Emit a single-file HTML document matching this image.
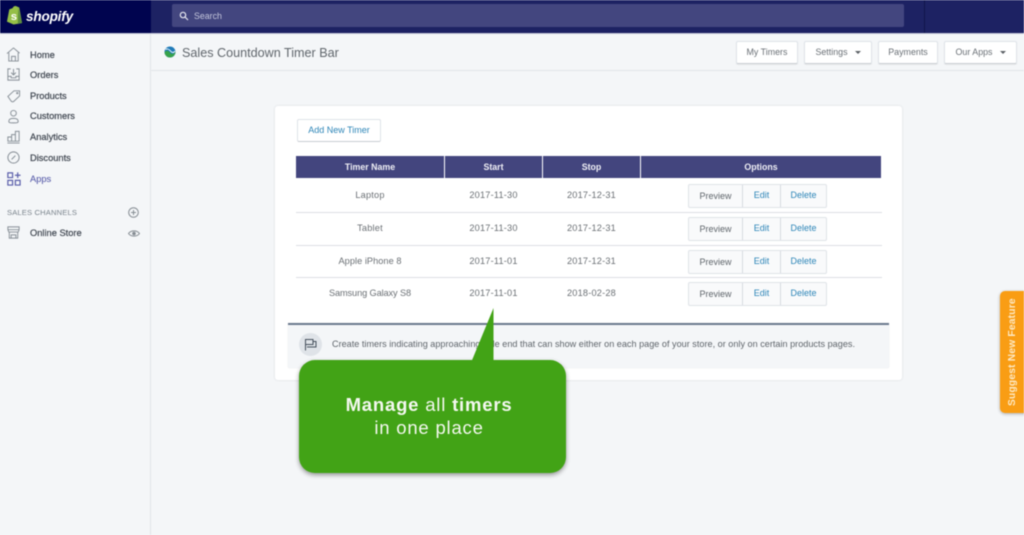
<!DOCTYPE html>
<html lang="en"><head><meta charset="utf-8"><title>Sales Countdown Timer Bar</title>
<style>
html,body{margin:0;padding:0}
body{width:1024px;height:535px;overflow:hidden;background:#f4f6f8;position:relative;font-family:"Liberation Sans",sans-serif;color:#5c6166}
#w{position:absolute;left:0;top:0;width:1024px;height:535px;overflow:hidden;filter:blur(.5px)}
.a{position:absolute;white-space:nowrap}
.nav{position:absolute;left:30px;font-size:9.3px;line-height:12px;color:#3f4650;font-weight:normal;-webkit-text-stroke:.2px #3f4650}
.ic{position:absolute;left:6px;width:15px;height:15px;fill:none;stroke:#858d95;stroke-width:1}
.tb{position:absolute;top:41px;height:23px;background:#fff;border:1px solid #dfe3e8;border-bottom-color:#c9cdd2;border-radius:2px;box-sizing:border-box;font-size:8.9px;line-height:20px;text-align:center;color:#6a7076;box-shadow:0 1px 1px rgba(0,0,0,.06)}
.car{display:inline-block;width:0;height:0;border:3px solid transparent;border-top:3.5px solid #5c6166;border-bottom:0;margin-left:7px;vertical-align:1px}
.th{position:absolute;top:156px;height:22px;background:#43457e;color:#f0f0f6;font-size:8.8px;font-weight:bold;line-height:22px;text-align:center}
.td{position:absolute;font-size:9.2px;line-height:12px;color:#6b7075;text-align:center;letter-spacing:.2px}
.hr{position:absolute;left:296px;width:586px;height:1px;background:#dcdfe3}
.bg{position:absolute;left:688px;width:139px;height:24px;background:#f9fafb;border:1px solid #dfe3e8;box-sizing:border-box;border-radius:2px}
.bg span{position:absolute;top:0;height:22px;line-height:21px;font-size:9px;text-align:center;color:#2e86b8}
.bg span.p{top:1px;color:#5f656b}
.bg i{position:absolute;top:0;width:1px;height:22px;background:#d7dbdf}
</style></head><body><div id="w">

<div class="a" style="left:0;top:0;width:1024px;height:33px;background:#1d2263"></div>
<div class="a" style="left:0;top:0;width:151px;height:33px;background:#00044f"></div>
<div class="a" style="left:0;top:33px;width:1024px;height:1px;background:#c4c7d6"></div>
<div class="a" style="left:924px;top:0;width:1px;height:33px;background:#11154b"></div>
<svg class="a" style="left:6px;top:5px" width="17" height="20" viewBox="0 0 18 21"><path d="M1 17.5 3.5 4.5 7 3.2C8 1 10 .5 11.5 1.5L14 2.5 17 19 8 20.5Z" fill="#95bf47"/><path d="M13 2.5 17 19 12.5 20Z" fill="#5e8e3e"/><text x="5" y="16" font-family="Liberation Sans" font-size="12" font-weight="bold" fill="#fff">s</text></svg>
<div class="a" style="left:26px;top:8px;font-size:13.6px;line-height:18px;font-weight:bold;font-style:italic;color:#fff;letter-spacing:-.2px">shopify</div>
<div class="a" style="left:172px;top:4px;width:732px;height:23px;background:#43467f;border-radius:2px"></div>
<svg class="a" style="left:179px;top:11px" width="10" height="10" viewBox="0 0 10 10" fill="none" stroke="#e6e7f0" stroke-width="1.2"><circle cx="4" cy="4" r="2.7"/><path d="M6 6l3 3"/></svg>
<div class="a" style="left:194px;top:10px;font-size:8.8px;line-height:12px;color:#c4c6dc">Search</div>

<div class="a" style="left:150px;top:34px;width:1px;height:501px;background:#e3e6e9"></div>
<div class="a" style="left:151px;top:70px;width:873px;height:1px;background:#e3e6e9"></div>

<svg class="ic" style="top:47px" viewBox="0 0 16 16"><path d="M1 7 8 1l6.500 5.500M3 6v9h10V6M6 15v-5h4v5"/></svg>
<div class="nav" style="top:49px">Home</div>
<svg class="ic" style="top:67px" viewBox="0 0 16 16"><path d="M5 2H2v12h12V2h-3M8 2v6M5.500 6 8 8.500 10.500 6M2 10h3.500v1.500h5V10H14"/></svg>
<div class="nav" style="top:69px">Orders</div>
<svg class="ic" style="top:88px" viewBox="0 0 16 16"><path d="M2 9 8.500 3h6v5.500L8 14.500C7 15 6 14.500 5.500 14Z"/><circle cx="12" cy="5.500" r=".7"/></svg>
<div class="nav" style="top:90px">Products</div>
<svg class="ic" style="top:109px" viewBox="0 0 16 16"><circle cx="8" cy="4.500" r="3"/><path d="M3 13c0-2 2-3 5-3s5 1 5 3-2 1.800-5 1.800S3 15 3 13Z"/></svg>
<div class="nav" style="top:110px">Customers</div>
<svg class="ic" style="top:129px" viewBox="0 0 16 16"><path d="M2 13V8.500h4V13M6 13V6h4v7M10 13V2.500h4V13M1.500 13h13M1.500 15h13"/></svg>
<div class="nav" style="top:131px">Analytics</div>
<svg class="ic" style="top:150px" viewBox="0 0 16 16"><circle cx="8" cy="8" r="6"/><path d="M6 10l4-4M6 6h.1M10 10h.1"/></svg>
<div class="nav" style="top:152px">Discounts</div>
<svg class="ic" style="top:171px;stroke:#5c60ab;stroke-width:1.300" viewBox="0 0 16 16"><path d="M2 2h5v5H2zM2 10h5v5H2zM10 10h5v5h-5zM12.500 1.500v6M9.500 4.500h6"/></svg>
<div class="nav" style="top:173px;color:#5c60ab;-webkit-text-stroke:.1px #5c60ab">Apps</div>

<div class="a" style="left:7px;top:207px;font-size:7.6px;line-height:11px;color:#7b848d;letter-spacing:.15px">SALES CHANNELS</div>
<svg class="a" style="left:128px;top:207px" width="11" height="11" viewBox="0 0 11 11" fill="none" stroke="#858c93"><circle cx="5.500" cy="5.500" r="4.800"/><path d="M5.500 3v5M3 5.500h5"/></svg>
<svg class="ic" style="top:225px" viewBox="0 0 16 16"><path d="M2 2h12v3l-1 2.500H3L2 5ZM2 5h12M3.500 7.500V14h9V7.500M5.500 14v-3.500h5V14"/></svg>
<div class="nav" style="top:227px">Online Store</div>
<svg class="a" style="left:128px;top:229px" width="12" height="9" viewBox="0 0 12 9"><path d="M.5 4.500C3 1 9 1 11.500 4.500 9 8 3 8 .5 4.500Z" fill="none" stroke="#858c93"/><circle cx="6" cy="4.500" r="1.800" fill="#858c93"/></svg>

<svg class="a" style="left:164px;top:46px" width="12" height="12" viewBox="0 0 12 12"><circle cx="6" cy="6" r="5.500" fill="#1f7ab8"/><path d="M.5 6.500C2 4 4.500 4.500 6 6.500S9.500 8.500 11.500 5.500C11.500 9 9 11.500 6 11.500 3 11.500 1 9.500.5 6.500Z" fill="#37a24b"/><path d="M1.500 3.500C3 2.500 5 3 6.500 5S10 7 11 5" fill="none" stroke="#fff" stroke-width=".9"/></svg>
<div class="a" style="left:182px;top:45px;font-size:12.600px;line-height:16px;color:#60666c;letter-spacing:0">Sales Countdown Timer Bar</div>

<div class="tb" style="left:736px;width:62px">My Timers</div>
<div class="tb" style="left:804px;width:68px">Settings<span class="car"></span></div>
<div class="tb" style="left:878px;width:60px">Payments</div>
<div class="tb" style="left:944px;width:73px">Our Apps<span class="car"></span></div>

<div class="a" style="left:275px;top:106px;width:627px;height:274px;background:#fff;border-radius:3px;box-shadow:0 0 2px rgba(60,70,90,.16)"></div>
<div class="a" style="left:297px;top:119px;width:84px;height:23px;background:#fff;border:1px solid #dfe3e8;border-bottom-color:#c9cdd2;box-sizing:border-box;border-radius:2px;font-size:9px;line-height:20px;text-align:center;color:#2e86b8">Add New Timer</div>

<div class="th" style="left:296px;width:148px">Timer Name</div>
<div class="th" style="left:445px;width:97px">Start</div>
<div class="th" style="left:543px;width:97px">Stop</div>
<div class="th" style="left:641px;width:240px">Options</div>

<div class="td" style="left:296px;width:148px;top:189px">Laptop</div><div class="td" style="left:445px;width:97px;top:189px">2017-11-30</div><div class="td" style="left:543px;width:97px;top:189px">2017-12-31</div>
<div class="hr" style="top:212px"></div>
<div class="td" style="left:296px;width:148px;top:222px">Tablet</div><div class="td" style="left:445px;width:97px;top:222px">2017-11-30</div><div class="td" style="left:543px;width:97px;top:222px">2017-12-31</div>
<div class="hr" style="top:245px"></div>
<div class="td" style="left:296px;width:148px;top:255px;letter-spacing:.05px">Apple iPhone 8</div><div class="td" style="left:445px;width:97px;top:255px">2017-11-01</div><div class="td" style="left:543px;width:97px;top:255px">2017-12-31</div>
<div class="hr" style="top:277px"></div>
<div class="td" style="left:296px;width:148px;top:287px;letter-spacing:-.1px">Samsung Galaxy S8</div><div class="td" style="left:445px;width:97px;top:287px">2017-11-01</div><div class="td" style="left:543px;width:97px;top:287px">2018-02-28</div>

<div class="bg" style="top:184px"><span class="p" style="left:0;width:53px">Preview</span><i style="left:53px"></i><span style="left:54px;width:37px">Edit</span><i style="left:91px"></i><span style="left:92px;width:45px">Delete</span></div>
<div class="bg" style="top:217px"><span class="p" style="left:0;width:53px">Preview</span><i style="left:53px"></i><span style="left:54px;width:37px">Edit</span><i style="left:91px"></i><span style="left:92px;width:45px">Delete</span></div>
<div class="bg" style="top:250px"><span class="p" style="left:0;width:53px">Preview</span><i style="left:53px"></i><span style="left:54px;width:37px">Edit</span><i style="left:91px"></i><span style="left:92px;width:45px">Delete</span></div>
<div class="bg" style="top:282px"><span class="p" style="left:0;width:53px">Preview</span><i style="left:53px"></i><span style="left:54px;width:37px">Edit</span><i style="left:91px"></i><span style="left:92px;width:45px">Delete</span></div>

<div class="a" style="left:288px;top:323px;width:601px;height:45px;background:#f4f6f8;border-top:2px solid #6c7a8e;box-sizing:border-box;border-radius:0 0 2px 2px;box-shadow:0 0 1px rgba(60,70,90,.2)"></div>
<div class="a" style="left:299px;top:333px;width:23px;height:23px;border-radius:50%;background:#dfe3e8"></div>
<svg class="a" style="left:304px;top:338px" width="13" height="13" viewBox="0 0 13 13" fill="none" stroke="#454f5b"><path d="M1.500 12.500V1.500H9v5H2M9 3.500h3v5.500H5M3 9h2"/></svg>
<div class="a" style="left:332px;top:338px;font-size:9.1px;line-height:12px;letter-spacing:.01px;color:#5f656b">Create timers indicating approaching sale end that can show either on each page of your store, or only on certain products pages.</div>

<div class="a" style="left:299px;top:360px;width:267px;height:113px;background:#42a316;border-radius:16px;box-shadow:0 2px 5px rgba(0,0,0,.4)"></div>
<svg class="a" style="left:460px;top:305px" width="45" height="65" viewBox="0 0 45 65"><path d="M8 65 33.500 3V65Z" fill="#42a316"/></svg>
<div class="a" style="left:299px;top:392.500px;width:260px;text-align:center;font-size:18.500px;line-height:23.500px;color:#f4f8f0;letter-spacing:.8px"><b>Manage</b> all <b>timers</b><br>in one place</div>

<div class="a" style="left:1000px;top:291px;width:30px;height:122px;background:#f99d14;border-radius:5px;box-shadow:0 1px 3px rgba(0,0,0,.3)"></div>
<div class="a" style="left:1007px;top:406px;width:110px;height:13px;transform-origin:0 0;transform:rotate(-90deg);font-size:10.200px;line-height:12px;font-weight:bold;color:#fde9c4;letter-spacing:.22px">Suggest New Feature</div>

</div></body></html>
